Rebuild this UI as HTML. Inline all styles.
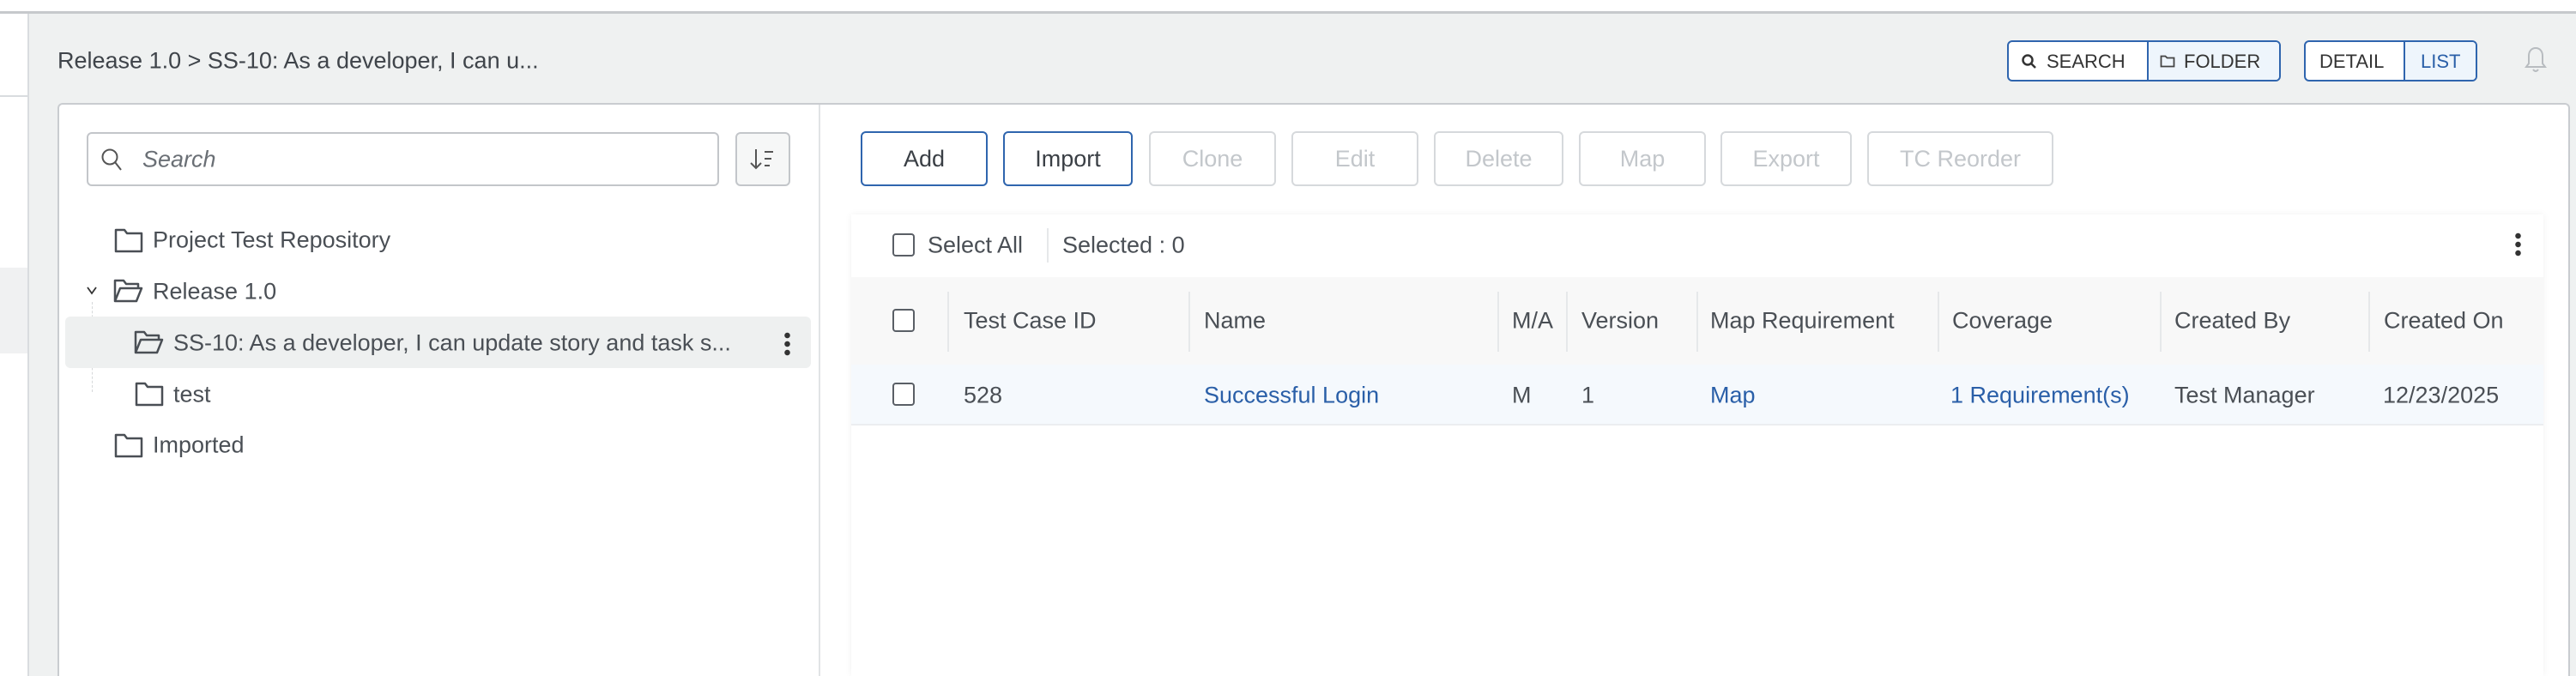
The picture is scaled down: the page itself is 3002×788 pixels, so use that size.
<!DOCTYPE html>
<html style="width:3002px;height:788px;overflow:hidden"><head><meta charset="utf-8"><style>
*{box-sizing:border-box;margin:0;padding:0}
body{width:3002px;height:788px;overflow:hidden;background:#fff;font-family:"Liberation Sans",sans-serif;color:#4a4f55;position:relative}
.a{position:absolute}
.t{position:absolute;font-size:27px;white-space:nowrap;line-height:1;transform:translateY(-50%)}
.btn{position:absolute;top:153px;height:64px;border:2px solid #d6d9dc;border-radius:6px;font-size:27px;color:#c3c7cb;display:flex;align-items:center;justify-content:center;background:#fff}
.btn.on{border-color:#2f65ae;color:#3a3f45}
.cb{position:absolute;width:26px;height:27px;border:2.5px solid #5a5f66;border-radius:4px;background:#fff}
.vd{position:absolute;width:2px;background:#e6e8ea;top:340px;height:70px}
.blue{color:#2a5fa8}
</style></head><body>
<div class="a" style="left:0;top:13px;width:3002px;height:3px;background:#c6c9cc"></div>
<div class="a" style="left:32px;top:16px;width:2px;height:772px;background:#d9dcdf"></div>
<div class="a" style="left:0;top:111px;width:32px;height:2px;background:#d9dcdf"></div>
<div class="a" style="left:0;top:312px;width:32px;height:100px;background:#f0f1f2"></div>
<div class="a" style="left:34px;top:16px;width:2968px;height:772px;background:#eff1f1"></div>
<div class="t" style="left:67px;top:71px;color:#3f444a">Release 1.0 &gt; SS-10: As a developer, I can u...</div>
<div class="a" style="left:2339px;top:47px;width:319px;height:48px;border:2.5px solid #2f65ae;border-radius:6px;background:#fff;overflow:hidden">
 <div class="a" style="left:161px;top:0;width:160px;height:44px;background:#eef5fc;border-left:2.5px solid #2f65ae"></div>
 <svg class="a" style="left:14px;top:13px" width="20" height="20" viewBox="0 0 20 20"><circle cx="8" cy="8" r="5.5" fill="none" stroke="#333" stroke-width="2.5"/><path d="M12 12l5 5" stroke="#333" stroke-width="2.5"/></svg>
 <div class="t" style="left:44px;top:23px;font-size:22px;color:#333">SEARCH</div>
 <svg class="a" style="left:176px;top:14px" width="18" height="16" viewBox="0 0 18 16"><path d="M1.5 2.5h5l2 2h8v10h-15z" fill="none" stroke="#444" stroke-width="1.8"/></svg>
 <div class="t" style="left:204px;top:23px;font-size:22px;color:#333">FOLDER</div>
</div>
<div class="a" style="left:2685px;top:47px;width:202px;height:48px;border:2.5px solid #2f65ae;border-radius:6px;background:#fff;overflow:hidden">
 <div class="a" style="left:114px;top:0;width:90px;height:44px;background:#eef5fc;border-left:2.5px solid #2f65ae"></div>
 <div class="t" style="left:16px;top:23px;font-size:22px;color:#333">DETAIL</div>
 <div class="t blue" style="left:134px;top:23px;font-size:22px">LIST</div>
</div>
<svg class="a" style="left:2940px;top:53px" width="30" height="36" viewBox="0 0 30 36"><path d="M15 3c-5 0-8 4-8 9v9l-3 4h22l-3-4v-9c0-5-3-9-8-9z" fill="none" stroke="#b8bcc0" stroke-width="2"/><path d="M12 28q3 4 6 0" fill="none" stroke="#b8bcc0" stroke-width="2"/></svg>
<div class="a" style="left:67px;top:120px;width:2928px;height:668px;background:#fff;border:2px solid #c9ccd0;border-bottom:none;border-radius:6px 6px 0 0"></div>
<div class="a" style="left:954px;top:122px;width:2px;height:666px;background:#e1e3e5"></div>
<div class="a" style="left:101px;top:154px;width:737px;height:63px;border:2px solid #c3c6ca;border-radius:6px"></div>
<svg class="a" style="left:116px;top:171px" width="28" height="30" viewBox="0 0 28 30"><circle cx="12" cy="12" r="8.5" fill="none" stroke="#555" stroke-width="2"/><path d="M18 18l7 9" stroke="#555" stroke-width="2"/></svg>
<div class="t" style="left:166px;top:186px;font-style:italic;color:#6a6f75">Search</div>
<div class="a" style="left:857px;top:154px;width:64px;height:63px;border:2px solid #c3c6ca;border-radius:6px;background:#f6f7f7"></div>
<svg class="a" style="left:872px;top:170px" width="34" height="32" viewBox="0 0 34 32"><path d="M9 4v22M3 20l6 6 6-6" fill="none" stroke="#555" stroke-width="2"/><path d="M19 7h10M19 15h8M19 23h6" stroke="#555" stroke-width="2"/></svg>
<svg width="0" height="0" style="position:absolute"><defs>
<symbol id="fc" viewBox="0 0 34 30"><path d="M2 3h10l3 4h17v21H2z" fill="none" stroke="#4a4f55" stroke-width="2.5" stroke-linejoin="round"/></symbol>
<symbol id="fo" viewBox="0 0 34 30"><path d="M2 27V3h10l3 4h14v5M2 27l6-15h25l-6 15z" fill="none" stroke="#4a4f55" stroke-width="2.5" stroke-linejoin="round"/></symbol>
</defs></svg>
<svg class="a" style="left:133px;top:265px" width="34" height="30"><use href="#fc"/></svg>
<div class="t" style="left:178px;top:280px">Project Test Repository</div>
<svg class="a" style="left:100px;top:333px" width="14" height="12" viewBox="0 0 14 12"><path d="M2 2l5 7 5-7" fill="none" stroke="#333" stroke-width="1.8"/></svg>
<div class="a" style="left:107px;top:352px;width:0;height:105px;border-left:1px dashed #d6d8da"></div>
<svg class="a" style="left:131px;top:324px" width="36" height="30"><use href="#fo"/></svg>
<div class="t" style="left:178px;top:340px">Release 1.0</div>
<div class="a" style="left:76px;top:369px;width:869px;height:60px;background:#eef0f0;border-radius:6px"></div>
<svg class="a" style="left:155px;top:384px" width="36" height="30"><use href="#fo"/></svg>
<div class="t" style="left:202px;top:400px">SS-10: As a developer, I can update story and task s...</div>
<div class="a" style="left:914px;top:386px;width:7px;height:30px;background:radial-gradient(circle,#333 3px,transparent 3.5px) 0 0/7px 10px repeat-y"></div>
<svg class="a" style="left:157px;top:444px" width="34" height="30"><use href="#fc"/></svg>
<div class="t" style="left:202px;top:460px">test</div>
<svg class="a" style="left:133px;top:504px" width="34" height="30"><use href="#fc"/></svg>
<div class="t" style="left:178px;top:519px">Imported</div>
<div class="btn on" style="left:1003px;width:148px">Add</div>
<div class="btn on" style="left:1169px;width:151px">Import</div>
<div class="btn" style="left:1339px;width:148px">Clone</div>
<div class="btn" style="left:1505px;width:148px">Edit</div>
<div class="btn" style="left:1671px;width:151px">Delete</div>
<div class="btn" style="left:1840px;width:148px">Map</div>
<div class="btn" style="left:2005px;width:153px">Export</div>
<div class="btn" style="left:2176px;width:217px">TC Reorder</div>
<div class="a" style="left:992px;top:250px;width:1972px;height:538px;background:#fff;box-shadow:0 0 8px rgba(0,0,0,0.06)"></div>
<div class="cb" style="left:1040px;top:272px"></div>
<div class="t" style="left:1081px;top:286px">Select All</div>
<div class="a" style="left:1220px;top:266px;width:2px;height:40px;background:#e6e8ea"></div>
<div class="t" style="left:1238px;top:286px">Selected : 0</div>
<div class="a" style="left:2931px;top:270px;width:7px;height:30px;background:radial-gradient(circle,#333 3px,transparent 3.5px) 0 0/7px 10px repeat-y"></div>
<div class="a" style="left:992px;top:323px;width:1972px;height:102px;background:#f8f8f8"></div>
<div class="cb" style="left:1040px;top:360px"></div>
<div class="vd" style="left:1104px"></div><div class="vd" style="left:1385px"></div><div class="vd" style="left:1745px"></div><div class="vd" style="left:1825px"></div><div class="vd" style="left:1977px"></div><div class="vd" style="left:2258px"></div><div class="vd" style="left:2517px"></div><div class="vd" style="left:2760px"></div>
<div class="t" style="left:1123px;top:374px">Test Case ID</div>
<div class="t" style="left:1403px;top:374px">Name</div>
<div class="t" style="left:1762px;top:374px">M/A</div>
<div class="t" style="left:1843px;top:374px">Version</div>
<div class="t" style="left:1993px;top:374px">Map Requirement</div>
<div class="t" style="left:2275px;top:374px">Coverage</div>
<div class="t" style="left:2534px;top:374px">Created By</div>
<div class="t" style="left:2778px;top:374px">Created On</div>
<div class="a" style="left:992px;top:425px;width:1972px;height:71px;background:#f5f9fd;border-bottom:2px solid #eceef0"></div>
<div class="cb" style="left:1040px;top:446px"></div>
<div class="t" style="left:1123px;top:461px">528</div>
<div class="t blue" style="left:1403px;top:461px">Successful Login</div>
<div class="t" style="left:1762px;top:461px">M</div>
<div class="t" style="left:1843px;top:461px">1</div>
<div class="t blue" style="left:1993px;top:461px">Map</div>
<div class="t blue" style="left:2273px;top:461px">1 Requirement(s)</div>
<div class="t" style="left:2534px;top:461px">Test Manager</div>
<div class="t" style="left:2777px;top:461px">12/23/2025</div>
</body></html>
